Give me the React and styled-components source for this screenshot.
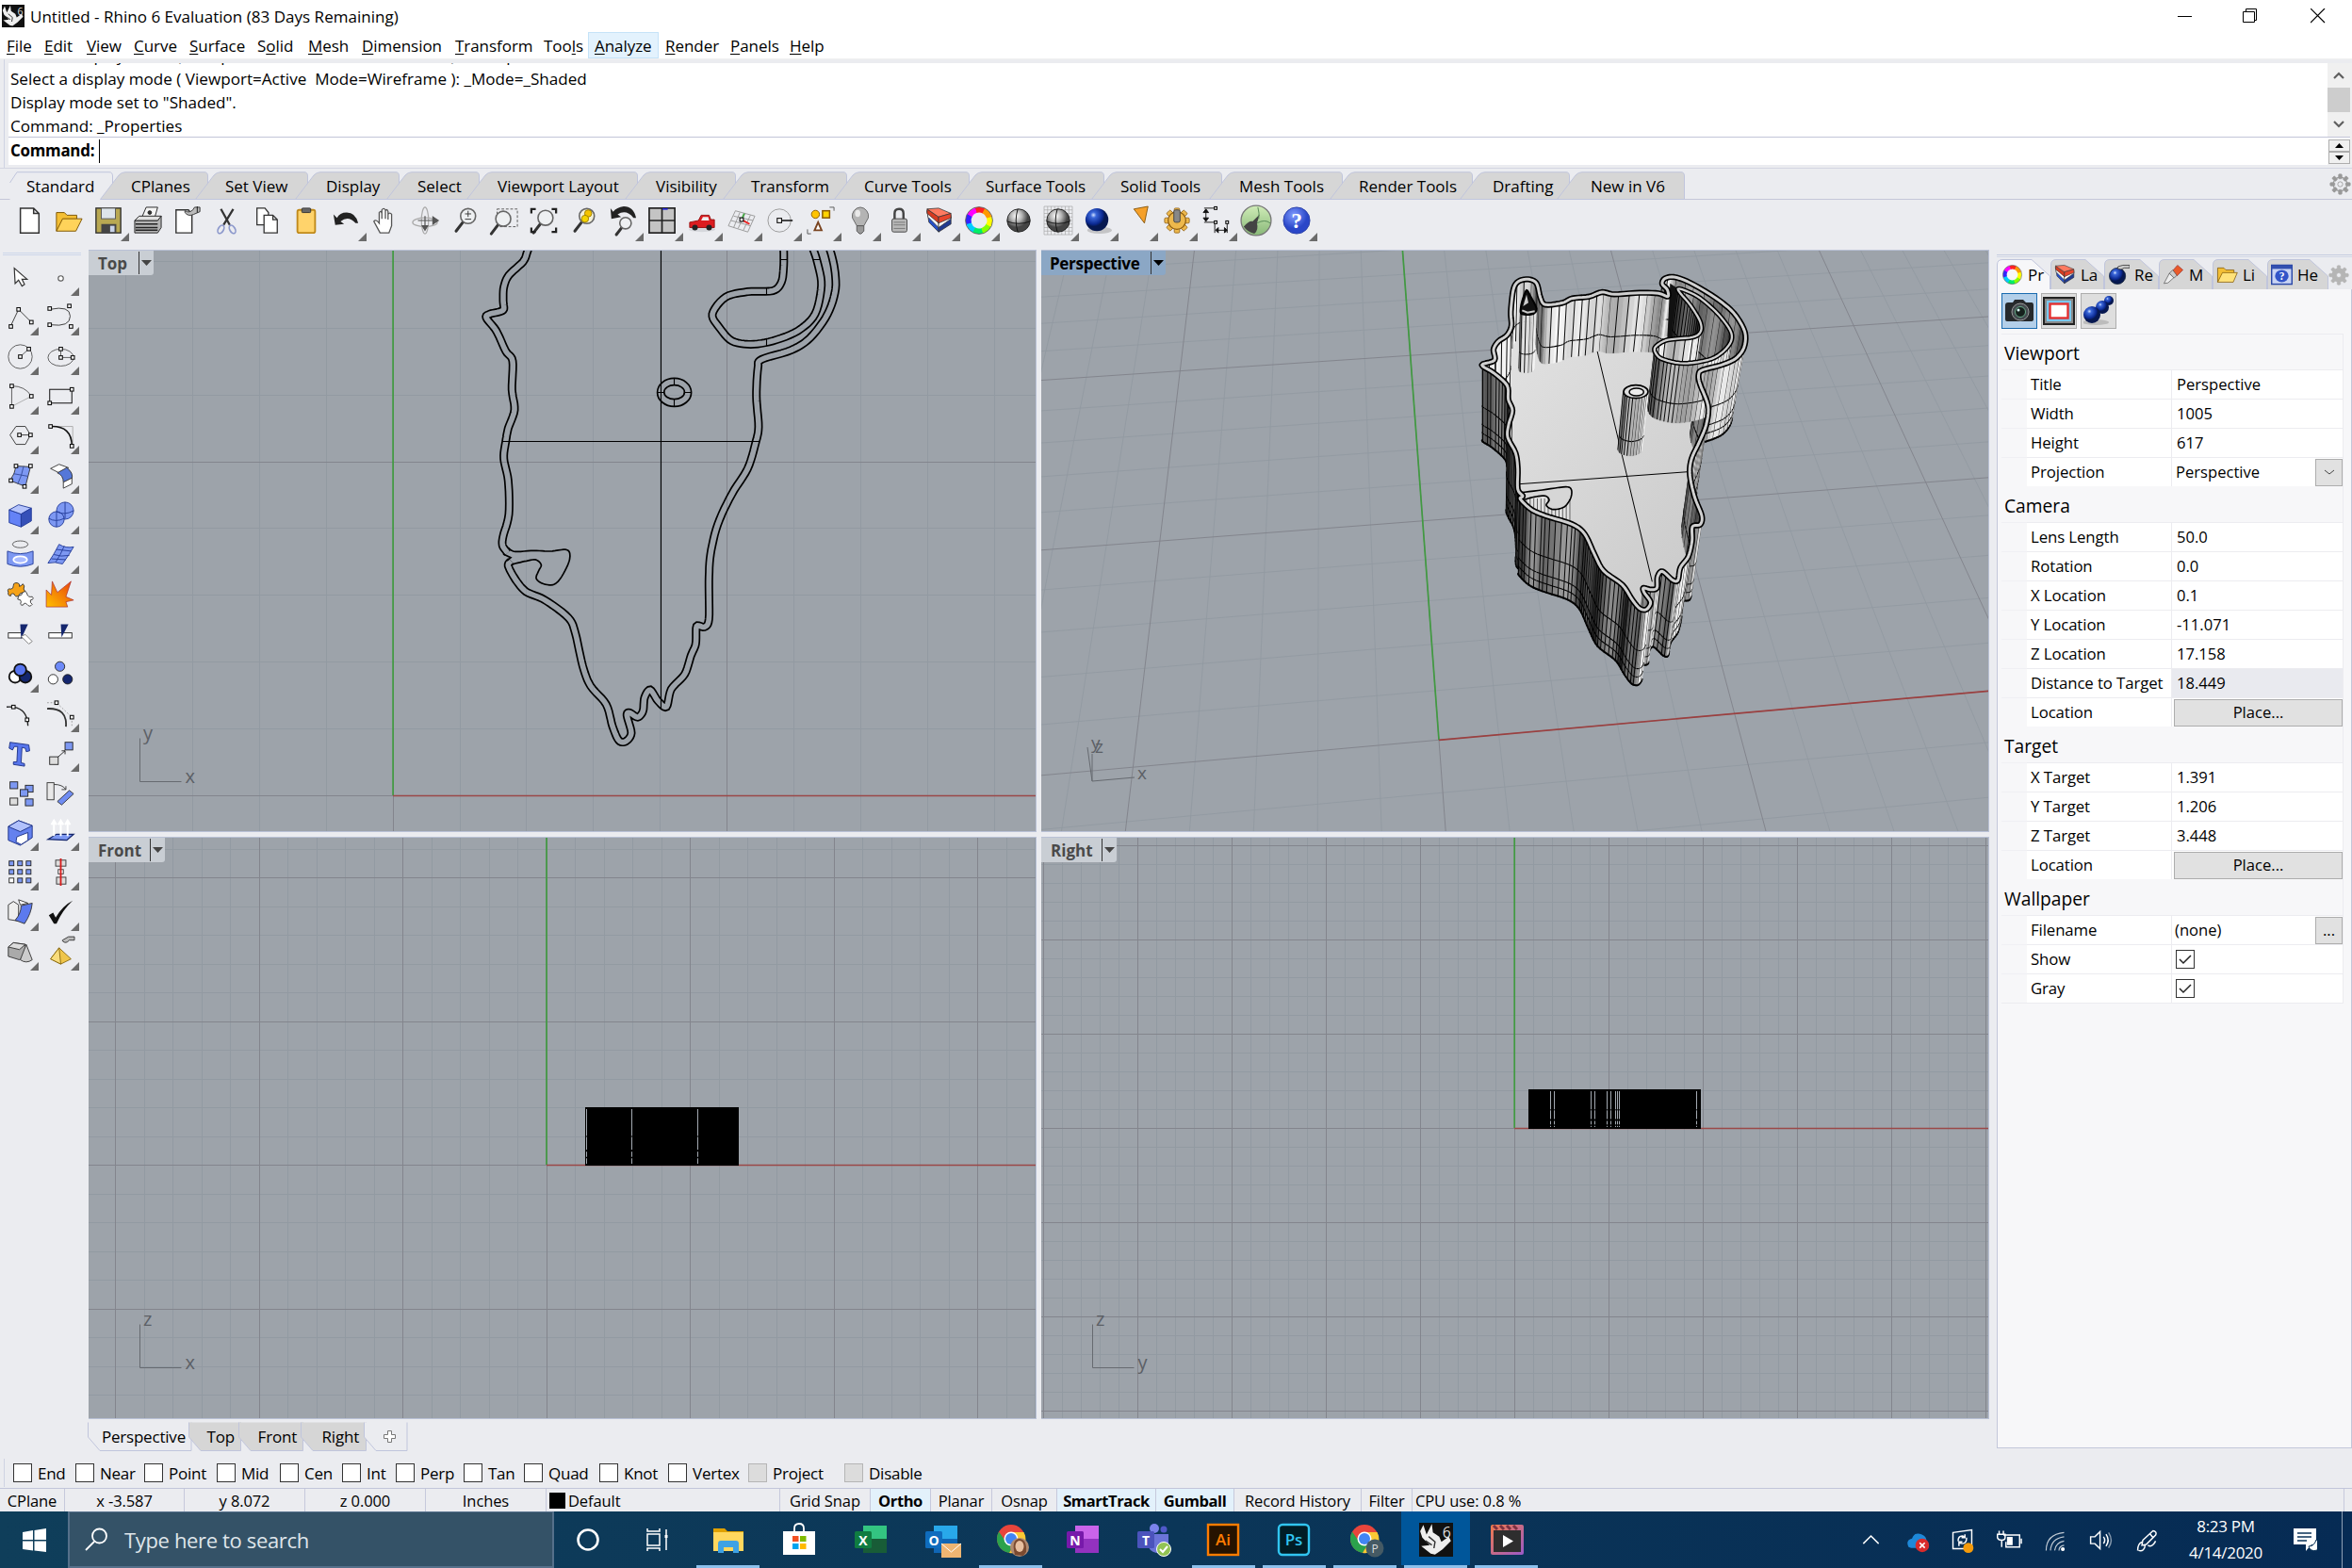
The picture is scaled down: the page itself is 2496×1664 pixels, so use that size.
import React from 'react';
import styled, { createGlobalStyle } from 'styled-components';

const Global = createGlobalStyle`
  * { box-sizing: border-box; }
  html, body { margin: 0; padding: 0; }
  body {
    width: 2496px; height: 1664px; overflow: hidden; background: #ebecf0; color: #000;
    font-family: "Open Sans", "Noto Sans", sans-serif; font-size: 17px; line-height: 1;
  }
  svg { display: block; }
`;

/* ---------- geometry helpers ---------- */
const pts = (s) => s.trim().split(/\s+/).map((p) => p.split(',').map(Number));

function sample(points, closed, n = 6) {
  const out = [];
  const L = points.length;
  const at = (i) => (closed ? points[(i + L) % L] : points[Math.max(0, Math.min(L - 1, i))]);
  const end = closed ? L : L - 1;
  for (let i = 0; i < end; i++) {
    const [a, b, c, d] = [at(i - 1), at(i), at(i + 1), at(i + 2)];
    for (let k = 0; k < n; k++) {
      const t = k / n;
      out.push([0, 1].map((m) => {
        const c1 = b[m] + (c[m] - a[m]) / 6.5;
        const c2 = c[m] - (d[m] - b[m]) / 6.5;
        const u = 1 - t;
        return u * u * u * b[m] + 3 * u * u * t * c1 + 3 * u * t * t * c2 + t * t * t * c[m];
      }));
    }
  }
  if (!closed) out.push(points[L - 1]);
  return out;
}
const toPath = (list, closed) =>
  'M' + list.map((p) => p[0].toFixed(1) + ' ' + p[1].toFixed(1)).join('L') + (closed ? 'Z' : '');

/* ---------- shell ---------- */
const Shell = styled.div`
  width: 2496px; height: 1664px; display: flex; flex-direction: column; background: #ebecf0;
`;
const TitleBar = styled.header`
  height: 34px; background: #fff; display: flex; align-items: center; padding-left: 2px; flex: none;
`;
const TitleText = styled.span`margin-left: 6px; flex: 1; letter-spacing: 0.02px;`;
const WindowButton = styled.div`
  width: ${(p) => p.$w}px; display: flex; justify-content: center;
`;
const MenuBar = styled.nav`
  height: 29px; background: #fff; display: flex; align-items: stretch; flex: none;
  border-bottom: 1px solid #f0f0f0;
`;
const MenuItem = styled.div`
  width: ${(p) => p.$w}px; padding: 1px 0 0 7px; display: flex; align-items: center; white-space: pre; line-height: 24px;
  background: ${(p) => (p.$on ? '#e3f2fd' : 'transparent')}; letter-spacing: -0.05px;
  box-shadow: ${(p) => (p.$on ? 'inset 0 0 0 1px #c5e3f8' : 'none')};
  u { text-underline-offset: 2px; text-decoration-thickness: 1px; }
`;
const MENU = [['', 'F', 'ile', 40], ['', 'E', 'dit', 45], ['', 'V', 'iew', 50], ['', 'C', 'urve', 59], ['', 'S', 'urface', 72],
  ['S', 'o', 'lid', 54], ['', 'M', 'esh', 57], ['', 'D', 'imension', 99], ['', 'T', 'ransform', 94], ['Too', 'l', 's', 54],
  ['', 'A', 'nalyze', 75], ['', 'R', 'ender', 69], ['', 'P', 'anels', 63], ['', 'H', 'elp', 60]];

const CommandArea = styled.section`
  height: 116px; flex: none; padding: 4px 0 3px 9px; display: flex; border-bottom: 1px solid #d3d6e2;
  background: linear-gradient(90deg, transparent 4px, #cfd3e2 4px, #cfd3e2 5px, transparent 5px);
`;
const CommandText = styled.div`flex: 1; background: #fff; display: flex; flex-direction: column;`;
const History = styled.div`
  height: 79px; border-bottom: 1px solid #c3c5d8; padding-left: 2px; overflow: hidden;
  display: flex; flex-direction: column; justify-content: flex-end; flex: none;
`;
const HistoryLine = styled.div`
  height: 25px; line-height: 24px; font-size: 17.1px; white-space: pre; flex: none;
  &:last-child { margin-bottom: -2px; }
`;
const Prompt = styled.div`
  flex: 1; padding-left: 2px; display: flex; align-items: center; font-weight: 700; font-size: 16.9px; letter-spacing: -0.25px;
`;
const Caret = styled.i`width: 1px; height: 25px; background: #000; margin-left: 5px;`;
const ScrollColumn = styled.div`width: 26px; display: flex; flex-direction: column; background: #efeff0; padding-right: 2px;`;
const ScrollPart = styled.div`
  height: 26px; display: flex; align-items: center; justify-content: center;
  background: ${(p) => (p.$thumb ? '#cdcdcd' : '#f0f0f0')};
`;
const Spinner = styled.div`
  height: 13px; margin: 0 0 0 1px; border: 1px solid #adadad; background: #f0f0f0;
  display: flex; align-items: center; justify-content: center;
`;
const SpinnerStack = styled.div`padding-top: 2px; background: #fff; border-top: 1px solid #c3c5d8;`;

/* ---------- toolbar tabs ---------- */
const TabStrip = styled.div`
  height: 33px; flex: none; display: flex; align-items: flex-end; padding-left: 10px; position: relative;
  border-bottom: 1px solid #c5c7d9;
`;
const Tab = styled.div`
  width: ${(p) => p.$w}px; height: 30px; position: relative; display: flex; align-items: center;
  padding-left: ${(p) => p.$pad}px; margin-bottom: -1px;
  > svg { position: absolute; left: ${(p) => (p.$first ? 0 : -14)}px; top: 0; }
  > span { position: relative; white-space: nowrap; }
`;
const GearSlot = styled.div`margin-left: auto; width: 26px; height: 31px; display: flex; align-items: center; justify-content: center;`;
const TABS = [['Standard', 110, 18], ['CPlanes', 101, 19], ['Set View', 106, 18], ['Display', 97, 19], ['Select', 85, 19],
  ['Viewport Layout', 168, 19], ['Visibility', 104, 19], ['Transform', 118, 16], ['Curve Tools', 130, 18], ['Surface Tools', 143, 17],
  ['Solid Tools', 125, 17], ['Mesh Tools', 128, 18], ['Render Tools', 138, 17], ['Drafting', 103, 21], ['New in V6', 122, 22]];

function TabItem({ label, w, pad, first }) {
  const W = first ? w : w + 14;
  return (
    <Tab $w={w} $pad={pad} $first={first}>
      <svg width={W} height="30">
        <path
          d={first ? `M0.5 12L8 .7H${W - 4}Q${W - 0.5} .7 ${W - 0.5} 5V30H.5Z` : `M0.5 29.5L20 4Q23 .7 27 .7H${W - 4}Q${W - 0.5} .7 ${W - 0.5} 5V29.5Z`}
          fill={first ? '#ebecf0' : '#d6d6d6'} stroke={first ? 'none' : '#c0c5dc'}
        />
        {first && <path d={`M.5 12L8 .7H${W - 4}Q${W - 0.5} .7 ${W - 0.5} 5V30`} fill="none" stroke="#c0c5dc" />}
      </svg>
      <span>{label}</span>
    </Tab>
  );
}

/* ---------- icon drawings on a 32 unit box ---------- */
const Sq = ({ x, y, s = 4 }) => <rect x={x - s / 2} y={y - s / 2} width={s} height={s} fill="#fff" stroke="#111" strokeWidth="1.2" />;
const Lens = ({ x = 20, y = 11, r = 8.5, c = '#eef0f2' }) => (
  <><path d={`M${x - r * 0.6} ${y + r * 0.7}L${x - r * 1.6} ${y + r * 2}`} stroke="#333" strokeWidth="3.2" strokeLinecap="round" />
    <circle cx={x} cy={y} r={r} fill={c} stroke="#666" strokeWidth="1.7" /></>
);
const Ball = ({ fill = 'url(#gball)' }) => (
  <><circle cx="16" cy="16" r="13" fill={fill} stroke="#222" /><path d="M3 17Q16 22 29 17M15 3Q11 16 15 29" fill="none" stroke="#111" /></>
);
const Wheel = () => (
  <g fill="none" strokeWidth="5.5">
    {['#f22', '#f0f', '#32f', '#0cf', '#0e6', '#8f0', '#ff0', '#f90'].map((c, i) => (
      <path key={c} d="M16 5A11 11 0 0 1 24.2 8.7" stroke={c} transform={`rotate(${i * -45 - 20} 16 16)`} />
    ))}
    <circle cx="16" cy="16" r="14" stroke="#555" strokeWidth=".8" />
  </g>
);
const Layers = () => (
  <g stroke="#333" strokeWidth=".8"><path d="M2 5L15 19V29L4 18Z" fill="#244fc8" /><path d="M15 19L29 12V20L15 29Z" fill="#203a90" />
    <path d="M2 5L15 15V24L3 12Z" fill="#fff" /><path d="M15 17L29 10V14L15 24Z" fill="#fff" />
    <path d="M2 3L15 12V19L2 8Z" fill="#d63a20" /><path d="M2 3L15 12L29 8L15 2Z" fill="#ff7a60" /><path d="M15 12L29 8V13L15 19Z" fill="#e8452c" /></g>
);
const RhinoMark = ({ size }) => (
  <svg width={size} height={size} viewBox="0 0 32 32" overflow="visible">
    <rect width="32" height="32" fill="#111" />
    <path d="M4 2L7 11L12 1L13 9L19 13L21 18L28 13L30 17L22 25L15 30L11 29L2 22L10 21L3 14L1 8Z" fill="#eee" />
    <path d="M9 13L15 18L14 24M6 17L12 21" stroke="#333" strokeWidth="1.3" fill="none" />
    <text x="22" y="14" fontFamily="Open Sans" fontSize="14" fill="#ddd">6</text>
  </svg>
);
const GearShape = ({ c = '#9a9a9a', r = 9, fill = 'none', tooth = 4.4 }) => (
  <g stroke={c} fill={fill}>
    {[0, 45, 90, 135, 180, 225, 270, 315].map((a) => <rect key={a} x={16 - tooth / 2} y={16 - r - 4} width={tooth} height="6" rx="1.2" fill={fill === 'none' ? c : fill} strokeWidth=".8" transform={`rotate(${a} 16 16)`} />)}
    <circle cx="16" cy="16" r={r} strokeWidth="1.3" />
    <circle cx="16" cy="16" r="3.2" fill="#ebecf0" /></g>
);
const hatch = (n, f) => Array.from({ length: n }, (_, i) => f(i)).join('');

const TOP_ICONS = [
  [<path d="M6 2H21L27 8V30H6ZM21 2V8H27" fill="#fff" stroke="#333" strokeWidth="1.6" />],
  [<g stroke="#7a5200"><path d="M2 28V7H11L14 10H25V14" fill="#f4bf35" /><path d="M2 28L9 14H31L24 28Z" fill="#ffd35a" /></g>],
  [<g><rect x="2" y="2" width="28" height="28" fill="#b8a852" stroke="#333" strokeWidth="1.5" /><rect x="8" y="2" width="16" height="12" fill="#dde4ea" stroke="#555" /><rect x="8" y="20" width="17" height="10" fill="#444" /><rect x="18" y="22" width="5" height="7" fill="#c9d3e8" /></g>, 1],
  [<g stroke="#222"><path d="M8 15L14 1H27L23 15Z" fill="#f5f5f5" /><circle cx="18" cy="7" r="2" fill="#333" /><path d="M1 16H27L31 11V24L27 30H1Z" fill="#b5b5b5" /><path d="M1 16H27L31 11H6Z" fill="#e0e0e0" /><path d="M2 20H27M2 24H27M2 27H27" strokeWidth="1.6" /></g>],
  [<g><path d="M3 4H17L21 9V30H3Z" fill="#fff" stroke="#333" strokeWidth="1.5" /><path d="M13 5Q18 8 22 4L24 1H30V6L23 9Q17 12 13 7Z" fill="#bbb" stroke="#333" /><path d="M27 0V7" stroke="#111" /></g>],
  [<g fill="none"><path d="M9 3L19 21M23 3L12 21" stroke="#333" strokeWidth="2.4" /><ellipse cx="9" cy="26" rx="3" ry="5" transform="rotate(30 9 26)" stroke="#8d99cc" strokeWidth="1.8" /><ellipse cx="22" cy="26" rx="3" ry="5" transform="rotate(-30 22 26)" stroke="#8d99cc" strokeWidth="1.8" /></g>],
  [<g fill="#fff" stroke="#333" strokeWidth="1.4"><path d="M5 2H14L18 7V21H5Z" /><path d="M13 10H23L28 15V30H13ZM23 10V15H28" /></g>],
  [<g stroke="#333"><rect x="6" y="4" width="20" height="26" rx="2" fill="#ffd36b" stroke="#c08a1c" strokeWidth="2" /><rect x="11" y="2" width="10" height="5" rx="1" fill="#666" /></g>],
  [<path d="M2 9L4 21L14 20L10 17Q19 10 27 19H30Q27 7 17 7Q9 7 6 13Z" fill="#222" />, 1],
  [<path d="M10 30L3 17Q5 14 9 19V7Q11 4 12 8V14V4Q14 1 16 4V14V5Q18 2 19 6V15V9Q21 6 23 9V22L20 30Z" fill="#fff" stroke="#555" strokeWidth="1.4" />],
  [<g fill="none" stroke="#aaa" strokeWidth="1.3"><ellipse cx="16" cy="16" rx="4" ry="15" /><ellipse cx="16" cy="18" rx="14" ry="5" /><path d="M16 11V22M8 16H25M13 22L16 27L19 22ZM25 12L31 16L25 20Z" stroke="#555" fill="#555" /></g>],
  [<><Lens /><path d="M16.5 8.5H23.5M20 5V12M16.5 14.5H23.5" stroke="#333" /></>],
  [<><rect x="8" y="3" width="23" height="20" fill="none" stroke="#555" strokeDasharray="3 2" /><Lens x={15} y={14} /></>],
  [<><Lens x={18} y={13} /><path d="M2 8V3H7M25 3H30V8M30 24V29H25M7 29H2V24" fill="none" stroke="#222" strokeWidth="2.4" /></>],
  [<><Lens x={20} y={11} c="#f3f0d8" /><circle cx="21.5" cy="8" r="4" fill="#f5c400" stroke="#a08000" /><circle cx="18" cy="14" r="4" fill="#f5d400" stroke="#a08000" /></>],
  [<><path d="M2 2L3 14L14 12L10 9Q20 3 28 13H31Q28 0 17 0Q9 1 5 6Z" fill="#222" /><Lens x={19} y={19} r={6.5} /></>, 1],
  [<g stroke="#222" strokeWidth="1.8" fill="#c4c4c4"><rect x="1" y="2" width="29" height="28" /><path d="M15.5 2V30M1 16H30" /><path d="M16 3H22" stroke="#22c" /></g>, 1],
  [<g><ellipse cx="16" cy="26" rx="15" ry="3" fill="#d5d7dc" /><path d="M2 24V18L12 16L15 10H24L26 15H30V24Z" fill="#dc1c20" stroke="#911" /><path d="M15 16L17 12H23L24 16Z" fill="#eee" /><circle cx="8" cy="24" r="3.2" fill="#222" /><circle cx="24" cy="24" r="3.2" fill="#222" /></g>, 1],
  [<g stroke="#999" fill="none"><path d="M9 5L31 11L23 29L1 22ZM14 7L7 24M20 8L12 25M26 10L18 27M7 11L29 16M4 16L26 22" /><path d="M16 15L25 20" stroke="#e22" strokeWidth="2" /><path d="M16 15L19 8" stroke="#4a4" strokeWidth="2" /><Sq x={16} y={15} /></g>, 1],
  [<g><circle cx="14" cy="16" r="13" fill="none" stroke="#999" /><path d="M14 16H29" stroke="#111" strokeWidth="1.6" /><Sq x={14} y={16} s={5} /></g>, 1],
  [<g><circle cx="10" cy="9" r="4.5" fill="#ffc400" stroke="#8a5a00" /><rect x="18" y="5" width="8" height="8" fill="#ffd400" stroke="#8a5a00" strokeWidth="1.6" /><path d="M13 18L17 27H9Z" fill="#fff" stroke="#7a4420" strokeWidth="2" /><path d="M26 1H31V5M1 26V31H5" fill="none" stroke="#555" /></g>, 1],
  [<g><path d="M16 1A10 10 0 0 0 7 13L12 22H20L25 13A10 10 0 0 0 16 1Z" fill="#b4b4b4" stroke="#666" /><ellipse cx="13" cy="8" rx="3" ry="4" fill="#e9e9e9" /><path d="M12 22H20V28L17 31H15L12 28Z" fill="#999" stroke="#555" /></g>, 1],
  [<g><path d="M10 15V8Q10 3 15 3T20 8V15" fill="none" stroke="#444" strokeWidth="2.6" /><rect x="7" y="14" width="17" height="15" rx="2" fill="#b8b8b8" stroke="#444" /><path d="M9 18H22M9 21H22M9 25H22" stroke="#777" /></g>, 1],
  [<Layers />, 1],
  [<g transform="translate(-1.6 -1.6) scale(1.1)"><Wheel /></g>, 1],
  [<Ball />],
  [<><path d={hatch(9, (i) => `M0 ${i * 4}H32M${i * 4} 0V32`)} stroke="#a5a5a5" strokeWidth=".7" /><Ball /></>, 1],
  [<><ellipse cx="18" cy="27" rx="14" ry="4" fill="#aaa" opacity=".6" /><circle cx="15" cy="15" r="13" fill="url(#gblue)" /></>, 1],
  [<path d="M12 3L28 0L24 19Z" fill="#f5a02a" stroke="#8a5a10" />, 1],
  [<g><GearShape c="#8a5a10" r={10} fill="#edb84c" tooth={6} /><circle cx="16" cy="16" r="4" fill="#edb84c" /><rect x="12.5" y="4" width="7" height="14" rx="2" fill="#888" stroke="#444" /></g>, 1],
  [<g fill="none" stroke="#111"><path d="M2 2H14M2 18H14V30M28 18V30M4 4V16M16 27H27" /><path d="M1 7L4 3L7 7ZM1 13L4 17L7 13ZM18 24L15 27L18 30ZM25 24L28 27L25 30Z" fill="#111" /><Sq x={15} y={2} s={3} /><Sq x={15} y={18} s={3} /><Sq x={28} y={18} s={3} /></g>, 1],
  [<g><circle cx="16" cy="16" r="17" fill="url(#ggreen)" stroke="#777" strokeWidth="1.4" /><path d="M2 23Q8 16 12 17L20 9L17 19Q19 27 14 31Q6 29 2 23Z" fill="#444" /><path d="M17 19Q26 14 32 19M18 1Q20 8 19 14" stroke="#585" fill="none" /></g>],
  [<g><circle cx="16" cy="16" r="15" fill="url(#ghelp)" stroke="#2a3fa8" /><text x="16" y="24" textAnchor="middle" fontFamily="Liberation Serif" fontSize="25" fontWeight="700" fill="#fff">?</text></g>, 1],
];

const B = '#7d98f2';
const SIDE_ICONS = [
  [<path d="M9 5L10 23L14 19L18 26L21 24L18 18L24 18Z" fill="#fff" stroke="#333" strokeWidth="1.3" />],
  [<ellipse cx="16" cy="17" rx="3" ry="3" fill="#fff" stroke="#555" strokeWidth="1.2" />, 1],
  [<g fill="none" stroke="#333"><path d="M5 26L14 7L29 22" /><Sq x={5} y={27} /><Sq x={14} y={7} /><Sq x={29} y={22} /></g>, 1],
  [<g fill="none" stroke="#333"><path d="M3 7Q27 2 27 15T4 25" /><Sq x={3} y={6} /><Sq x={26} y={3} /><Sq x={3} y={25} /><Sq x={28} y={27} /></g>, 1],
  [<g fill="none" stroke="#555"><circle cx="16" cy="16" r="14" /><path d="M16 16L26 7" /><Sq x={16} y={16} /><Sq x={26} y={7} /></g>, 1],
  [<g fill="none" stroke="#555"><ellipse cx="16" cy="17" rx="15" ry="10" /><path d="M16 7V17H30" /><Sq x={16} y={17} /><Sq x={16} y={7} /><Sq x={30} y={17} /></g>, 1],
  [<g fill="none" stroke="#555"><path d="M6 28V4Q22 4 29 16" /><path d="M6 28L29 16" stroke="#aaa" /><Sq x={6} y={4} /><Sq x={29} y={16} /><Sq x={6} y={28} /></g>, 1],
  [<g><rect x="3" y="8" width="26" height="16" fill="none" stroke="#222" strokeWidth="1.2" /><Sq x={3} y={24} /><Sq x={29} y={8} /></g>, 1],
  [<g fill="none" stroke="#333"><path d="M4 15L11 5H22L28 15L22 26H11Z" /><path d="M16 15H28" /><Sq x={15} y={15} /><Sq x={28} y={15} /></g>, 1],
  [<g fill="none"><path d="M4 5H30V29" stroke="#aaa" /><path d="M4 5Q29 4 29 28" stroke="#111" strokeWidth="1.8" /><Sq x={4} y={5} /><Sq x={29} y={28} /></g>, 1],
  [<g><path d="M11 5L28 6L22 29L4 22Q10 14 11 5Z" fill={B} stroke="#333" /><path d="M20 5Q18 16 13 26M8 14L25 17" stroke="#334a9a" fill="none" /><Sq x={11} y={5} /><Sq x={28} y={5} /><Sq x={5} y={22} /><Sq x={21} y={29} /></g>, 1],
  [<g stroke="#333"><path d="M4 8L14 3L25 7L14 13Z" fill="#fff" /><path d="M12 13L23 7Q31 13 29 20L19 24Q19 16 12 13Z" fill="#5577d8" /><path d="M19 24L29 19V26L19 31Z" fill="#fff" /></g>, 1],
  [<g stroke="#223a98"><path d="M3 10L17 15V30L3 25Z" fill="#6482f6" /><path d="M3 10L14 4L29 8L17 15Z" fill="#b4c3fb" /><path d="M17 15L29 8V23L17 30Z" fill="#3550b8" /></g>, 1],
  [<g stroke="#223a98"><circle cx="21" cy="11" r="10" fill={B} /><circle cx="11" cy="21" r="9" fill={B} /><path d="M11 12Q20 17 31 11M2 20Q10 25 20 20M21 1V20M11 12V30" fill="none" /></g>, 1],
  [<g><ellipse cx="16" cy="4" rx="9" ry="4" fill="none" stroke="#555" /><path d="M1 12Q16 18 31 12V27Q16 33 1 27Z" fill={B} stroke="#223a98" /><ellipse cx="16" cy="22" rx="8" ry="4" fill="#a9bbff" stroke="#fff" strokeWidth="2" /></g>, 1],
  [<g stroke="#223a98"><path d="M14 4Q22 9 31 7Q26 16 18 27Q9 24 1 26Q8 16 14 4Z" fill={B} /><path d="M8 16Q16 19 26 17M20 6Q16 16 10 25M11 10L28 12M5 21L22 22" fill="none" /></g>, 1],
  [<g stroke="#333"><path d="M2 14Q0 9 5 10Q8 10 8 6Q8 2 13 3Q16 4 15 7Q18 6 19 4Q22 6 20 10Q23 13 20 14Q15 14 14 18Q10 20 9 16Q5 14 5 18Q1 18 2 14Z" fill="#f5a218" /><path d="M14 18Q18 18 19 14Q23 11 24 16Q25 20 30 19Q33 22 28 23Q27 26 30 28Q27 32 24 28Q21 25 19 29Q15 29 17 25Q17 22 13 22Z" fill="#fff" /></g>],
  [<path d="M-1 31V11L5 17L6 1L12 14L28 1L22 19L31 23L22 25L24 31Z" fill="url(#gboom)" stroke="#a33" strokeWidth=".8" />],
  [<g><rect x="2" y="15" width="16" height="6" fill="#fff" stroke="#222" /><path d="M16 5H25L17 22Z" fill="#14266e" /><path d="M17 19L22 17L30 25L26 28Z" fill="#fff" stroke="#777" /></g>],
  [<g><rect x="2" y="15" width="27" height="6" fill="#fff" stroke="#222" /><path d="M16 5H25L17 20Z" fill="#14266e" /></g>],
  [<g stroke="#111" strokeWidth="2"><circle cx="10" cy="20" r="7" fill="#fff" /><circle cx="22" cy="20" r="7" fill="#14266e" /><circle cx="16" cy="12" r="7" fill="#5674ee" /></g>, 1],
  [<g stroke="#222"><circle cx="15" cy="8" r="5.6" fill="#6d8af8" /><circle cx="7" cy="23" r="5.6" fill="#fff" /><circle cx="24" cy="23" r="5.6" fill="#14266e" /></g>],
  [<g fill="none" stroke="#222" strokeWidth="1.5"><path d="M0 8Q24 6 25 30" /><Sq x={8} y={8} /><Sq x={24} y={23} /></g>],
  [<g fill="none"><path d="M0 10Q24 9 22 31" stroke="#333" strokeWidth="2" /><path d="M0 3H11L29 20V30" stroke="#999" strokeDasharray="2 2" /><Sq x={11} y={3} /><Sq x={29} y={20} /></g>, 1],
  [<path d="M4 3L26 6L27 13L23 14L22 10L18 9L17 27L21 28V31L8 29V26L12 26L13 8L9 8L7 12L3 10Z" fill="#5876ec" stroke="#1b2f86" />],
  [<g stroke="#222"><rect x="3" y="20" width="10" height="9" fill="#ddd" /><rect x="21" y="3" width="9" height="9" fill={B} /><path d="M13 20L21 13M17 13H21V17" fill="none" /></g>, 1],
  [<g stroke="#222"><rect x="4" y="3" width="9" height="8" fill={B} /><rect x="22" y="7" width="9" height="8" fill={B} /><rect x="16" y="12" width="9" height="8" fill={B} /><rect x="4" y="22" width="9" height="8" fill="#ddd" /><rect x="22" y="23" width="9" height="8" fill={B} /></g>],
  [<g stroke="#333"><rect x="0" y="4" width="8" height="20" fill="#e8e8e8" /><path d="M12 26L26 13L31 17L17 30Z" fill="#6f8cf2" /><path d="M8 6Q18 6 22 12M17 12H22V8" fill="none" /></g>],
  [<g stroke="#1b2f86"><path d="M2 9L14 2L30 8V22L16 31L2 25Z" fill="#6481ee" /><path d="M2 9L14 2L30 8L16 15Z" fill="#b1c1fb" /><path d="M12 21L25 16V25L17 30L11 27Z" fill="#fff" /></g>, 1],
  [<g><path d="M1 24L11 18H31L23 25Z" fill={B} stroke="#14266e" strokeWidth="1.4" /><path d="M8 20V4M5 7L8 2L11 7M16 20V4M13 7L16 2L19 7M24 20V4M21 7L24 2L27 7" stroke="#fff" strokeWidth="2.2" fill="none" /></g>, 1],
  [<g stroke="#222">{[0, 1, 2, 3, 4, 5, 6, 7, 8].map((i) => <rect key={i} x={3 + (i % 3) * 10} y={3 + Math.floor(i / 3) * 10} width="5.5" height="5.5" fill={i === 6 ? '#fff' : B} />)}</g>, 1],
  [<g stroke="#333"><rect x="10" y="2" width="12" height="7" fill="#ddd" /><rect x="13" y="13" width="6" height="5" fill="#fff" /><rect x="11" y="22" width="11" height="8" fill="#ddd" /><path d="M16 0V32" stroke="#d81b1b" strokeWidth="2" /></g>, 1],
  [<g stroke="#333"><path d="M2 8L8 4L14 8V27L2 25Z" fill="#eee" /><path d="M14 2L25 6L16 8Z" fill="#fff" /><path d="M10 26Q17 18 17 9L30 6Q29 18 21 30Z" fill="#5c7aee" /></g>, 1],
  [<path d="M2 20L7 17L10 23Q18 9 30 3Q18 14 11 30H8Z" fill="#111" />, 1],
  [<g stroke="#333"><path d="M2 11L8 6L22 8V20L15 26L2 22Z" fill="#aaa" /><path d="M2 11L8 6L22 8L15 14Z" fill="#ddd" /><path d="M23 8L30 26Q23 31 16 26Z" fill="#ccc" /></g>, 1],
  [<g stroke="#8a6a10"><path d="M14 12L28 25L16 31L4 25Z" fill="#efc54a" /><path d="M14 12L16 31L4 25Z" fill="#f8dc7c" /><path d="M18 4Q22 8 26 3H32V-1H25L18 3Z" fill="#bbb" stroke="#333" /></g>, 1],
];

const ToolBar = styled.div`height: 53px; flex: none; display: flex; padding: 1px 0 0 9.5px;`;
const ToolButton = styled.div`
  width: ${(p) => p.$w}px; height: 42px; position: relative; display: flex; align-items: center; justify-content: center;
  > svg.flyout { position: absolute; right: ${(p) => p.$fx}px; bottom: ${(p) => p.$fy}px; }
`;
function Tool({ icon, w = 42.04, size = 30, fx = -1, fy = -1 }) {
  return (
    <ToolButton $w={w} $fx={fx} $fy={fy}>
      <svg width={size} height={size} viewBox="0 0 32 32" overflow="visible">{icon[0]}</svg>
      {icon[1] && <svg className="flyout" width="9" height="9"><path d="M9 0V9H0Z" fill="#6b6b6b" /></svg>}
    </ToolButton>
  );
}

/* ---------- main area ---------- */
const Main = styled.div`height: 1314px; flex: none; display: flex;`;
const Side = styled.aside`width: 94px; padding: 3px 8px 0 0; flex: none;`;
const SideRule = styled.div`height: 3px; margin-left: 3px; margin-bottom: 2px; border: solid #cdd6ea; border-width: 1px 0;`;
const SideGrid = styled.div`display: grid; grid-template-columns: 43px 43px; grid-auto-rows: 42.1px;`;
const Center = styled.main`width: 2017px; flex: none; display: flex; flex-direction: column;`;
const Views = styled.div`
  display: grid; grid-template-columns: 1006px 1006px; grid-template-rows: 618px 618px; gap: 5px; height: 1241px; flex: none;
`;
const ViewFrame = styled.div`
  position: relative; background: #9da3aa; border: 1px solid #b9c1d6; border-left: 0; overflow: hidden;
  > svg { width: 100%; height: 100%; }
`;
const ViewTitle = styled.div`
  position: absolute; left: 0; top: 0; height: 26px; display: flex; align-items: center; padding-left: ${(p) => (p.$on ? 9 : 10)}px;
  background: ${(p) => (p.$on ? '#8ba7c5' : '#c9ced4')}; color: ${(p) => (p.$on ? '#000' : '#4a4a4a')};
  font-weight: 700; font-size: 17px; border-bottom-right-radius: 3px; width: ${(p) => p.$w}px; letter-spacing: ${(p) => (p.$on ? '-0.3px' : '0')};
`;
const TitleArrow = styled.span`
  margin-left: auto; width: 16px; height: 24px; border-left: 1px solid #333; display: flex; align-items: center; padding-left: 2px;
`;

function View({ name, w, on, x, y, children }) {
  return (
    <ViewFrame>
      <svg viewBox={`${x} ${y} 1005 616`} preserveAspectRatio="none">{children}</svg>
      <ViewTitle $w={w} $on={on}>{name}
        <TitleArrow><svg width="11" height="6"><path d="M0 0H11L5.5 6Z" fill={on ? '#000' : '#444'} /></svg></TitleArrow>
      </ViewTitle>
    </ViewFrame>
  );
}
const line = (x1, y1, x2, y2) => `M${x1.toFixed(1)} ${y1.toFixed(1)}L${x2.toFixed(1)} ${y2.toFixed(1)}`;

function OrthoGrid({ ox, oy, step, x, y }) {
  let minor = '';
  let major = '';
  for (let i = -60; i < 90; i++) {
    const gx = Math.round(ox + i * step) + 0.5;
    const gy = Math.round(oy + i * step) + 0.5;
    if (gx > x && gx < x + 1005) { if (i % 5) minor += line(gx, y, gx, y + 617); else major += line(gx, y, gx, y + 617); }
    if (gy > y && gy < y + 617) { if (i % 5) minor += line(x, gy, x + 1005, gy); else major += line(x, gy, x + 1005, gy); }
  }
  return (
    <g fill="none">
      <path d={minor} stroke="#929aa2" /><path d={major} stroke="#83858d" />
      <path d={line(ox + 0.5, oy, ox + 0.5, y)} stroke="#419a41" strokeWidth="1.7" />
      <path d={line(ox + 0.5, oy + 0.5, x + 1005, oy + 0.5)} stroke="#9b4848" strokeWidth="1.7" />
    </g>
  );
}
const AxisLabels = ({ x, y, a, b }) => (
  <g fontFamily="Open Sans" fontSize="20" fill="#5c6066">
    <path d={`M${x} ${y - 46}V${y}H${x + 44}`} fill="none" stroke="#666a70" />
    <text x={x + 3.5} y={y - 45}>{a}</text><text x={x + 48} y={y + 1}>{b}</text>
  </g>
);

/* Plan outline of the part */
const plan = (s) => pts(s).map(([a, b]) => [460 + a / 3, 260 + b / 2.8]);
const PLAN = [
  '305,0 297,25 285,50 240,90 224,125 222,165 224,190 212,198 180,205 168,216 200,255 230,315 252,345 250,430 258,490 238,545 230,585 224,635 238,700 240,800 222,865 220,893 236,915',
  '247,939 238,953 262,995 295,1030 355,1055 430,1108 452,1155 475,1250 500,1310 550,1365 570,1430 590,1472 612,1475 630,1450 616,1398 625,1390 650,1403 667,1385 672,1345 690,1322 715,1355 742,1372 757,1320 800,1275 820,1220 835,1185 838,1133 862,1135 877,1112 877,1000 882,920 905,830 950,740 1000,665 1025,590 1035,540 1028,450 1033,365 1045,340 1140,312 1200,275 1255,205 1280,130 1275,60 1258,0',
  '1115,0 1115,60 1108,110 1080,136 1000,139 930,155 888,205 910,245 950,285 1010,295 1080,285 1160,255 1215,205 1235,120 1222,50 1204,0',
].map((s) => toPath(sample(plan(s))));
const PLAN_NOSE = toPath(sample(plan('238,900 260,911 320,908 370,910 420,905 434,917 430,945 405,990 380,1010 345,1005 327,990 335,968 343,950 325,935 290,940 250,949')));
const PLAN_NOTCH = toPath(plan('222,918 246,929 234,938'));

function TopDrawing() {
  return (
    <>
      <OrthoGrid ox={416.6} oy={844} step={70.9} x={94} y={266} />
      <mask id="wall" maskUnits="userSpaceOnUse" x="94" y="260" width="1010" height="630">
        <g fill="none">
          {PLAN.map((d) => <path key={d} d={d} stroke="#fff" strokeWidth="9" />)}
          {PLAN.map((d) => <path key={d} d={d} stroke="#000" strokeWidth="5.6" />)}
        </g>
      </mask>
      <rect x="94" y="260" width="1010" height="630" mask="url(#wall)" />
      <g fill="none" stroke="#000" strokeWidth="1.7">
        <path d={PLAN_NOSE} /><path d={PLAN_NOTCH} />
        <ellipse cx="715.6" cy="416.4" rx="18" ry="15" /><ellipse cx="715.6" cy="416.2" rx="10.8" ry="7.5" />
        <path d="M701.5 260V752M533 468.5H806M697 416.5H705M726 416.5H734M715.5 401V409M715.5 424V432M813.5 305V313M813.5 360V367M829 275.5H836M862 275.5H870" strokeWidth="1.1" />
      </g>
      <AxisLabels x={148.5} y={829.5} a="y" b="x" />
    </>
  );
}
const Slab = ({ x, y, w, h, slots }) => (
  <>
    <rect x={x} y={y} width={w} height={h} />
    <path d={slots.map((s) => `M${s + 0.5} ${y + 2}V${y + h - 2}`).join('')} stroke="#a4aab2" strokeDasharray={`${h * 0.46} 1 ${h * 0.22} 2 ${h * 0.09} 1.5 ${h * 0.1} 1`} />
  </>
);

/* Ground plane projected with two vanishing points */
const proj = (i, j) => {
  const a = 0.003402 * i;
  const b = 0.03246 * j;
  const w = 1 + a + b;
  return [(1527 + a * 20284 + b * 1403.5) / w, (785.3 + a * -885 + b * -880) / w];
};
function PerspGrid() {
  let minor = '';
  let major = '';
  for (let i = -15; i <= 25; i++) {
    const d = line(...proj(i, -6), ...proj(i, 22));
    if (i % 5) minor += d; else major += d;
  }
  for (let j = -6; j <= 20; j++) {
    const d = line(...proj(-20, j), ...proj(30, j));
    if (j % 5) minor += d; else major += d;
  }
  return (
    <g fill="none"><path d={minor} stroke="#929aa2" strokeWidth=".9" /><path d={major} stroke="#83858d" />
      <path d={line(...proj(0, 0), ...proj(0, 22))} stroke="#419a41" strokeWidth="1.7" />
      <path d={line(...proj(0, 0), ...proj(30, 0))} stroke="#9b4040" strokeWidth="1.7" /></g>
  );
}

/* Extruded part, in a space three times the screen size */
const RIM = sample(pts('192,245 190,200 198,130 214,104 245,97 272,110 284,155 300,178 355,172 385,158 440,152 480,138 520,145 600,140 660,142 690,152 688,130 672,112 680,95 710,90 760,108 840,155 900,205 935,265 932,315 905,350 860,370 800,386 788,400 792,430 818,500 812,560 790,615 765,670 760,720 775,790 798,850 793,878 768,885 767,930 755,980 730,1015 722,1055 705,1055 672,1027 657,1045 655,1080 635,1085 612,1080 615,1095 635,1125 622,1148 600,1145 575,1115 545,1070 485,1025 455,970 425,908 385,877 300,850 255,830 220,797 228,787 212,765 212,700 205,650 180,600 183,560 195,515 182,480 178,435 135,395 98,370 138,355 135,320 150,295 178,275'), true, 5);
const RIM_D = toPath(RIM, true);
const CURL = sample(pts('722,128 785,152 850,208 892,268 882,310 830,350 740,365 670,350 648,325 655,308 690,290 770,281 795,262 792,230 762,180'), true, 6);
const CURL_D = toPath(CURL, true);
const NOSE = sample(pts('215,777 290,768 365,758 383,768 380,795 360,822 325,830 303,817 312,800 300,787 265,790 228,800'), false, 6);
const POST = sample(pts('548,455 560,441 588,435 616,441 628,455 616,469 588,475 560,469'), true, 3);
const EAR = sample(pts('228,160 240,132 252,150 272,190 262,207 238,210 222,205 222,185'), true, 4);

function Walls({ curve, depth, inner, closed = true, gap = 11, levels, bias = 0, hem = 0 }) {
  const quads = [];
  let run = 0;
  const n = closed ? curve.length : curve.length - 1;
  for (let i = 0; i < n; i++) {
    const a = curve[i];
    const b = curve[(i + 1) % curve.length];
    const drop = (p, f) => [p[0] - (p[0] - 100) * 0.05 * f * (depth / 240), p[1] + depth * f];
    const dx = b[0] - a[0];
    const dy = b[1] - a[1];
    const len = Math.hypot(dx, dy) || 1;
    const k = -(a[0] - 100) * 0.05 / 240;
    const facing = dx - dy * k;
    run += len;
    const edge = run >= gap;
    if (edge) run = 0;
    if (inner ? facing <= 0 : facing >= 0) continue;
    const s = inner ? 1 : -1;
    const nx = (-dy / len) * s;
    const v = Math.round(255 * Math.max(0.15, Math.min(0.96, 0.68 + 0.42 * nx + 0.12 * Math.sin(i * 0.7) + bias)));
    quads.push({ y: Math.max(a[1], b[1]), a, b, A: drop(a, 1), B: drop(b, 1), v, edge, lv: levels.map((f) => line(...drop(a, f), ...drop(b, f))).join('') });
  }
  quads.sort((p, q) => p.y - q.y);
  return quads.map((q, i) => (
    <g key={i}>
      <path d={`M${q.a}L${q.b}L${q.B}L${q.A}Z`} fill={`rgb(${q.v},${q.v},${q.v})`} stroke={`rgb(${q.v},${q.v},${q.v})`} strokeWidth="1" />
      <path d={q.lv} stroke="#000" strokeWidth="3.2" fill="none" />
      {hem > 0 && <path d={line(...q.A, ...q.B)} stroke="#000" strokeWidth={hem} strokeLinecap="round" />}
      {q.edge && <path d={line(...q.b, ...q.B)} stroke="#000" strokeWidth="2.9" />}
    </g>
  ));
}
const Ribbon = ({ d, w = 19, inner = 9 }) => (
  <g fill="none" strokeLinejoin="round"><path d={d} stroke="#000" strokeWidth={w} /><path d={d} stroke="#d0d0d0" strokeWidth={inner} /></g>
);
function PartSolid() {
  return (
    <g transform="translate(1540 264) scale(.33333)">
      <Walls curve={RIM} depth={240} levels={[0.54, 0.78, 0.89]} gap={11} bias={-0.02} hem={6} />
      <clipPath id="inside"><path d={RIM_D} /></clipPath>
      <g clipPath="url(#inside)">
        <rect x="80" y="80" width="880" height="1090" fill="url(#gfloor)" />
        <path d="M465 325L640 1060M218 749L755 710" stroke="#000" strokeWidth="3" />
        <Walls curve={RIM} depth={188} inner levels={[0.72]} gap={21} bias={0.1} />
        <path d="M697 110L728 132L792 232V262L762 282L688 288Z" fill="#111" />
        <Walls curve={EAR} depth={185} levels={[0.68]} gap={12} bias={0.15} />
        <Walls curve={CURL} depth={190} levels={[0.68]} gap={9} bias={0.02} />
        <clipPath id="curl"><path d={CURL_D} /></clipPath>
        <g clipPath="url(#curl)">
          <path d={CURL_D} fill="#8f8f8f" /><Walls curve={CURL} depth={185} inner levels={[0.85]} gap={20} bias={0.08} />
        </g>
        <path d="M228 800L300 787L380 790V885L228 860Z" fill="#e2e2e2" />
        <path d={hatch(13, (i) => `M${240 + i * 11.5} 795V870`)} stroke="#222" strokeWidth="2" />
        <path d={toPath(NOSE, true)} fill="#d6d6d6" />
        <path d={toPath(NOSE)} fill="none" stroke="#000" strokeWidth="5" />
        <Walls curve={POST} depth={185} levels={[0.75]} gap={7} bias={0.05} />
      </g>
      <path d={toPath(EAR, true)} fill="#111" stroke="#000" strokeWidth="6" />
      <path d="M229 183L240 146L246 172Z" fill="#ccc" />
      <path d="M226 196L243 203L266 199" fill="none" stroke="#ccc" strokeWidth="6" />
      <Ribbon d={CURL_D} w={16} inner={7} />
      <ellipse cx="588" cy="455" rx="39" ry="21" fill="#ddd" stroke="#000" strokeWidth="5" />
      <ellipse cx="590" cy="456" rx="23" ry="12" fill="#eee" stroke="#000" strokeWidth="4.5" />
      <Ribbon d={RIM_D} />
    </g>
  );
}

/* ---------- viewport tabs, osnap, status ---------- */
const ViewTabs = styled.div`display: flex; height: 35px; padding-top: 3px; margin-left: -1px;`;
const ViewTab = styled.div`
  width: ${(p) => p.$w}px; height: 31px; position: relative; display: flex; align-items: center; justify-content: flex-end; padding: 0 ${(p) => p.$pad}px 1px 0;
  > svg { position: absolute; left: ${(p) => (p.$first ? 0 : -3)}px; top: 0; }
  > span { position: relative; letter-spacing: -0.2px; }
`;
const VTABS = [['Perspective', 110, 6], ['Top', 53, 7], ['Front', 66, 7], ['Right', 67, 8]];
const Footer = styled.div`height: 25px; flex: none; display: flex; border-top: 1px solid #c2c5da; padding-right: 8px;`;
const OsnapBar = styled.div`height: 0; flex: 0 0 0;`;
const OsnapRow = styled.div`
  height: 30px; margin: -31px 0 1px; width: 1200px; display: flex; align-items: center; padding-left: 14px; position: relative;
  background: linear-gradient(90deg, transparent 4px, #cfd3e2 4px, #cfd3e2 5px, transparent 5px);
`;
const OsnapItem = styled.label`width: ${(p) => p.$w}px; display: flex; align-items: center; gap: 6px; letter-spacing: -0.25px;`;
const Box = styled.i`
  width: 20px; height: 20px; border: 1px solid ${(p) => (p.$off ? '#b5b5b5' : '#333')}; background: ${(p) => (p.$off ? '#dcdcdc' : '#fff')};
  display: flex; align-items: center; justify-content: center; flex: none;
`;
const OSNAPS = [['End', 66], ['Near', 73], ['Point', 77], ['Mid', 67], ['Cen', 66], ['Int', 57], ['Perp', 72], ['Tan', 64], ['Quad', 80], ['Knot', 73], ['Vertex', 85], ['Project', 102, 1], ['Disable', 100, 1]];
const Cell = styled.div`
  width: ${(p) => p.$w}px; border-right: 1px solid #c6c9dc; display: flex; align-items: center; font-size: 16.5px; white-space: nowrap;
  justify-content: ${(p) => (p.$left ? 'flex-start' : 'center')}; background: ${(p) => (p.$on ? '#e3f1fb' : 'transparent')};
  font-weight: ${(p) => (p.$on ? 700 : 400)}; letter-spacing: ${(p) => (p.$on ? '-0.4px' : '-0.1px')}; padding-left: ${(p) => (p.$left ? 3 : 0)}px;
  padding-top: 2px; gap: 3px;
`;
const Swatch = styled.i`width: 17px; height: 17px; background: #000; margin-top: -2px;`;
const CELLS = [['CPlane', 69], ['x -3.587', 127], ['y 8.072', 128], ['z 0.000', 128], ['Inches', 128], ['Default', 248, 's'], ['Grid Snap', 96], ['Ortho', 64, 'b'],
  ['Planar', 65], ['Osnap', 69], ['SmartTrack', 105, 'b'], ['Gumball', 83, 'b'], ['Record History', 135], ['Filter', 54]];

/* ---------- properties panel ---------- */
const PanelWrap = styled.aside`width: 377px; margin-left: 8px; padding-top: 8px; height: 1274px;`;
const PanelTabs = styled.div`height: 37px; border-top: 1px solid #c5cce0; display: flex; align-items: flex-end; position: relative; top: -3px; margin-bottom: -3px; box-shadow: inset 0 1px #ebecf0, inset 0 2px #d3d8e6;`;
const PanelTab = styled.div`
  width: ${(p) => p.$w}px; height: 32px; padding-left: ${(p) => p.$pad}px; display: flex; align-items: center; gap: 5px; position: relative; overflow: hidden;
  > svg { flex: none; position: relative; } > svg.shape { position: absolute; left: 0; top: 0; } > span { position: relative; }
`;
const PanelBody = styled.div`
  height: 1230px; background: #f7f7f9; border: solid #c3c7da; border-width: 0 1px 1px 1px; padding: 4px 8px 0 4px;
`;
const PanelButtons = styled.div`display: flex; gap: 4px; height: 42.5px;`;
const PageButton = styled.div`
  width: 38px; height: 38px; display: flex; align-items: center; justify-content: center;
  background: ${(p) => (p.$on ? '#b3cfe9' : '#dedede')}; border: 1px solid ${(p) => (p.$on ? '#1a6bb0' : '#adadad')};
`;
const PropGrid = styled.div`border: 1px solid #ececf0; border-left: 0;`;
const GroupTitle = styled.div`height: 37.9px; padding-left: 3px; display: flex; align-items: center; font-size: 19.2px; padding-top: 3px;`;
const PropRow = styled.div`height: 31px; display: grid; grid-template-columns: 27px 154px 1fr;`;
const Label = styled.div`background: #fff; border: solid #ececf0; border-width: 1px 1px 0 0; padding-left: 4px; display: flex; align-items: center; font-size: 16.8px; letter-spacing: -0.1px; white-space: nowrap;`;
const Value = styled.div`
  background: ${(p) => (p.$ro ? '#e9eaef' : '#fff')}; border-top: 1px solid #ececf0; padding-left: ${(p) => p.$pad ?? 5}px; display: flex; align-items: center;
  justify-content: space-between; font-size: 16.6px;
`;
const Gutter = styled.div`border-top: 1px solid #f0f0f4;`;
const PlaceButton = styled.div`
  flex: 1; height: 29px; background: #e1e1e1; border: 1px solid #adadad; display: flex; align-items: center; justify-content: center;
`;
const MiniButton = styled.div`width: 29px; height: 29px; background: #e1e1e1; border: 1px solid #adadad; display: flex; align-items: center; justify-content: center;`;
const GROUPS = [
  ['Viewport', [['Title', 'Perspective'], ['Width', '1005'], ['Height', '617'], ['Projection', 'Perspective', 'drop']]],
  ['Camera', [['Lens Length', '50.0'], ['Rotation', '0.0'], ['X Location', '0.1'], ['Y Location', '-11.071'], ['Z Location', '17.158'], ['Distance to Target', '18.449', 'ro'], ['Location', 'Place...', 'btn']]],
  ['Target', [['X Target', '1.391'], ['Y Target', '1.206'], ['Z Target', '3.448'], ['Location', 'Place...', 'btn']]],
  ['Wallpaper', [['Filename', '(none)', 'file'], ['Show', '', 'check'], ['Gray', '', 'check']]],
];
function ValueOf({ text, kind }) {
  if (kind === 'btn') return <Value $pad={2}><PlaceButton>{text}</PlaceButton></Value>;
  if (kind === 'check') return <Value $pad={4}><Box><svg width="16" height="14"><path d="M2 7L6 11L14 3" fill="none" stroke="#222" strokeWidth="1.5" /></svg></Box></Value>;
  if (kind === 'drop') return <Value $pad={4}>{text}<MiniButton><svg width="12" height="7"><path d="M1 1L6 5L11 1" fill="none" stroke="#444" /></svg></MiniButton></Value>;
  if (kind === 'file') return <Value $pad={3}>{text}<MiniButton>...</MiniButton></Value>;
  return <Value $ro={kind === 'ro'}>{text}</Value>;
}
const BlueBalls = () => <g><ellipse cx="13" cy="28" rx="14" ry="3" fill="#999" opacity=".5" /><circle cx="27" cy="5" r="5" fill="url(#gblue)" /><circle cx="20" cy="12" r="7" fill="url(#gblue)" /><circle cx="9" cy="20" r="9" fill="url(#gblue)" /></g>;
const PTABS = [
  ['Pr', 57, <Wheel />], ['La', 57, <Layers />],
  ['Re', 58, <g><circle cx="14" cy="18" r="12" fill="url(#gblue)" stroke="#123" /><path d="M14 7Q20 10 24 6H32V2H22L15 4Z" fill="#ccc" stroke="#222" /></g>],
  ['M', 57, <g><path d="M2 29L10 14L17 20L8 28Z" fill="#eee" stroke="#555" /><path d="M15 10L22 2L30 9L21 18Z" fill="#ea5a2a" stroke="#933" /><path d="M10 14L15 9L21 17L17 21Z" fill="#ccc" stroke="#555" /></g>],
  ['Li', 58, <g stroke="#7a5200"><path d="M2 27V6H11L14 9H26V13" fill="#f4bf35" /><path d="M2 27L9 13H31L25 27Z" fill="#ffe27a" /></g>],
  ['He', 65, <g><rect x="1" y="2" width="30" height="28" fill="#c9d4f4" stroke="#2a48a8" strokeWidth="2" /><path d="M1 5H31" stroke="#3350b0" strokeWidth="5" /><ellipse cx="16" cy="18" rx="10" ry="9" fill="#3355c8" /><text x="16" y="24" textAnchor="middle" fontFamily="Liberation Serif" fontSize="16" fontWeight="700" fill="#fff">?</text></g>],
];

/* ---------- taskbar ---------- */
const TaskBar = styled.footer`
  height: 60px; flex: none; display: flex; align-items: center; background: linear-gradient(90deg, #0f3e5a, #0b3658 50%, #062b54); color: #fff;
`;
const StartButton = styled.div`width: 72px; display: flex; justify-content: center;`;
const Search = styled.div`
  width: 516px; height: 60px; background: #345267; border: 2px solid #55708a; border-width: 1px 2px 2px; display: flex; align-items: center; padding-left: 16px; gap: 17px;
  font-size: 22px; color: #dfe5ea; letter-spacing: -0.35px; flex: none;
`;
const TaskButton = styled.div`
  width: ${(p) => p.$w ?? 75.1}px; height: 60px; flex: none; display: flex; align-items: center; justify-content: center;
  background: ${(p) => (p.$active ? 'linear-gradient(#00569a, #00569a) center / 73px 100% no-repeat' : 'none')};
  border-bottom: 3px solid transparent; padding-top: 2px;
  border-image: ${(p) => (p.$open ? 'linear-gradient(90deg, transparent 7px, #8cc0ec 7px, #8cc0ec 68px, transparent 68px) 3' : 'none')};
`;
const Tray = styled.div`margin-left: auto; display: flex; align-items: center; height: 60px;`;
const TrayIcon = styled.div`width: ${(p) => p.$w ?? 48.9}px; display: flex; justify-content: center;`;
const Clock = styled.div`width: 110px; margin-left: 4px; text-align: center; font-size: 17px; line-height: 28px; letter-spacing: -0.3px;`;
const Chrome = ({ badge }) => (
  <g><circle cx="16" cy="15" r="15" fill="#e8453c" /><path d="M3 7.5A15 15 0 0 0 14 30L21 19L9 16Z" fill="#2ba24c" /><path d="M16 8H29.5A15 15 0 0 1 14 30L22 17Z" fill="#fcc934" />
    <circle cx="16" cy="15" r="7.5" fill="#fff" /><circle cx="16" cy="15" r="6" fill="#4285f4" />{badge}</g>
);
const OfficeTile = ({ c, d, l, ch }) => (
  <g><path d="M9 1H34V30H9Z" fill={c} /><path d="M9 15H34V30H9Z" fill={l} /><rect x="0" y="7" width="18" height="18" rx="1.5" fill={d} /><text x="9" y="21.5" textAnchor="middle" fontFamily="Open Sans" fontSize="14" fontWeight="700" fill="#fff">{ch}</text></g>
);
const Adobe = ({ c, bg, t, r }) => (
  <g><rect x="0" y="0" width="32" height="32" rx={r} fill={bg} stroke={c} strokeWidth="2.4" /><text x="16" y="22" textAnchor="middle" fontFamily="Open Sans" fontSize="17" fontWeight="600" fill={c}>{t}</text></g>
);
const TASKS = [
  [<circle cx="16" cy="16" r="10.5" fill="none" stroke="#fff" strokeWidth="2.6" />, 0],
  [<g fill="none" stroke="#fff" strokeWidth="1.5"><rect x="5" y="10" width="13" height="12" /><path d="M5 4V7H18V4M5 28V25H18V28M25 5V27" /><path d="M25 11V14" strokeWidth="3" /></g>, 0],
  [<g><path d="M0 4H12L15 7H32V14H0Z" fill="#e0a100" /><rect x="0" y="8" width="32" height="20" fill="#ffd75e" /><path d="M5 30V20Q5 17 8 17H24Q27 17 27 20V30H21V24H11V30Z" fill="#3ea2e5" /></g>, 1],
  [<g><path d="M11 8V4Q11 -1 16 -1T21 4V8" fill="none" stroke="#fff" strokeWidth="1.8" /><rect x="-1" y="7" width="34" height="25" fill="#fff" /><path d="M9 12H15.5V18H9Z" fill="#f25022" /><path d="M17 12H23.5V18H17Z" fill="#7fba00" /><path d="M9 20H15.5V26H9Z" fill="#00a4ef" /><path d="M17 20H23.5V26H17Z" fill="#ffb900" /></g>, 0],
  [<OfficeTile c="#33c481" l="#185c37" d="#107c41" ch="X" />, 0],
  [<g><OfficeTile c="#28a8ea" l="#1066b5" d="#0f6cbd" ch="O" /><path d="M17 20H38V35H17Z" fill="#efb572" /><path d="M17 20L27.5 29L38 20" stroke="#fff" fill="none" /></g>, 0],
  [<Chrome badge={<g><circle cx="25" cy="24" r="10" fill="#b08a70" /><path d="M20 32Q16 17 24 15Q33 15 32 29L29 33Z" fill="#7a4a30" /><ellipse cx="25" cy="23" rx="4.5" ry="6" fill="#e8c0a0" /></g>} />, 1],
  [<OfficeTile c="#ca64ea" l="#9332bf" d="#7719aa" ch="N" />, 0],
  [<g><circle cx="28" cy="5" r="3.5" fill="#5059c9" /><circle cx="18" cy="4" r="5" fill="#7b83eb" /><path d="M12 10H33V22Q30 30 20 30Q12 28 12 22Z" fill="#6b74d8" /><rect x="0" y="7" width="18" height="18" rx="1.5" fill="#4b53bc" /><text x="9" y="21.5" textAnchor="middle" fontFamily="Open Sans" fontSize="14" fontWeight="700" fill="#fff">T</text><circle cx="28" cy="26" r="7.5" fill="#92c353" stroke="#fff" /><path d="M24 26L27 29L32 23" stroke="#fff" strokeWidth="2" fill="none" /></g>, 0],
  [<Adobe c="#ff7c00" bg="#261300" t="Ai" r={0} />, 1],
  [<Adobe c="#31c5f0" bg="#001d26" t="Ps" r={4} />, 1],
  [<Chrome badge={<g><circle cx="27" cy="25" r="9.5" fill="#455a64" /><text x="27" y="29.5" textAnchor="middle" fontFamily="Open Sans" fontSize="12" fill="#ddd">P</text></g>} />, 1],
  ['rhino', 2],
  [<g><defs><linearGradient id="gfilm" x2="1" y2="1"><stop stopColor="#f07a4a" /><stop offset="1" stopColor="#9a5ac8" /></linearGradient></defs><rect x="-1" y="0" width="35" height="32" rx="2" fill="url(#gfilm)" /><rect x="2" y="6" width="29" height="23" fill="#2e2e2e" /><path d="M2 1L6 5M9 1L13 5M16 1L20 5M23 1L27 5" stroke="#7a3040" strokeWidth="3" /><path d="M12 11L23 17.5L12 24Z" fill="#fff" /></g>, 1],
];
const TRAY = [
  [<path d="M7 20L16 11L25 20" />],
  [<g stroke="none"><path d="M6 24Q2 16 10 14Q13 6 21 9Q27 11 27 17Q31 19 29 25H9Z" fill="#1e88d8" /><circle cx="22" cy="22" r="8" fill="#d92b2b" /><path d="M19 19L25 25M25 19L19 25" stroke="#fff" strokeWidth="1.8" /></g>],
  [<g><path d="M5 7L27 4V26H5Z" /><path d="M11 17Q11 11 16 11L19 12M21 13Q21 20 16 20L12 19M19 9V13H15M12 23V18H16" /><circle cx="23" cy="25" r="6" fill="#f59b0b" stroke="none" /></g>],
  [<g><path d="M10 10H29V24H13V18" /><path d="M31 14V20M5 5V9M10 5V9M3 9H12V13Q12 16 8 16T3 13ZM8 16V24" /><rect x="15" y="13" width="5" height="8" fill="#fff" /></g>],
  [<g strokeWidth="1.3"><path d="M6 28Q6 9 27 7M11 28Q12 14 27 12M16 28Q17 19 27 17M21 28Q21 23 27 22" opacity=".75" /><circle cx="25.5" cy="26.5" r="1.6" fill="#fff" /></g>],
  [<g><path d="M4 12H9L15 6V26L9 20H4Z" /><path d="M19 12Q22 16 19 20M22 9Q27 16 22 23" /><path d="M25 7Q31 16 25 25" opacity=".5" /></g>],
  [<g><path d="M11 16L23 5Q28 6 26 10L15 21L10 22ZM19 8L23 13M5 28Q5 20 10 18M6 28Q13 30 14 21M17 22Q22 25 26 17" /></g>],
];

export default function App() {
  return (
    <Shell>
      <Global />
      <svg width="0" height="0" style={{ position: 'absolute' }}>
        <defs>
          <radialGradient id="gball" cx=".4" cy=".3"><stop stopColor="#fff" /><stop offset=".5" stopColor="#b5b5b5" /><stop offset="1" stopColor="#444" /></radialGradient>
          <radialGradient id="gblue" cx=".35" cy=".3"><stop stopColor="#cfe0ff" /><stop offset=".25" stopColor="#3a66d8" /><stop offset=".8" stopColor="#0a2890" /><stop offset="1" stopColor="#061850" /></radialGradient>
          <radialGradient id="ghelp" cx=".4" cy=".3"><stop stopColor="#7f9cff" /><stop offset="1" stopColor="#2a46c8" /></radialGradient>
          <linearGradient id="ggreen" x2="0" y2="1"><stop stopColor="#d0ecb8" /><stop offset="1" stopColor="#88b878" /></linearGradient>
          <linearGradient id="gboom" x1="1" y1="0" x2="0" y2="1"><stop stopColor="#e8400c" /><stop offset="1" stopColor="#ffc000" /></linearGradient>
          <linearGradient id="gfloor" x2="1" y2="1"><stop stopColor="#e6e6e6" /><stop offset="1" stopColor="#c6c6c6" /></linearGradient>
        </defs>
      </svg>
      <TitleBar>
        <RhinoMark size={24} />
        <TitleText>Untitled - Rhino 6 Evaluation (83 Days Remaining)</TitleText>
        <WindowButton $w={69}><svg width="16" height="16"><path d="M0 8.5H15" stroke="#000" /></svg></WindowButton>
        <WindowButton $w={70}><svg width="16" height="16" fill="none" stroke="#000"><path d="M.5 3.5H12.5V14.5H.5ZM3.5 3V.5H14.5V12.5H13" /></svg></WindowButton>
        <WindowButton $w={73}><svg width="16" height="16"><path d="M0 0L15 15M15 0L0 15" stroke="#000" strokeWidth="1.2" /></svg></WindowButton>
      </TitleBar>
      <MenuBar>{MENU.map(([a, b, c, w]) => <MenuItem key={b + c} $w={w} $on={b === 'A'}><span>{a}<u>{b}</u>{c}</span></MenuItem>)}</MenuBar>
      <CommandArea>
        <CommandText>
          <History>
            <HistoryLine>{'Select a display mode ( Viewport=Active  Mode=Wireframe ): _Viewport=_Active'}</HistoryLine>
            <HistoryLine>{'Select a display mode ( Viewport=Active  Mode=Wireframe ): _Mode=_Shaded'}</HistoryLine>
            <HistoryLine>Display mode set to "Shaded".</HistoryLine>
            <HistoryLine>Command: _Properties</HistoryLine>
          </History>
          <Prompt>Command:<Caret /></Prompt>
        </CommandText>
        <ScrollColumn>
          <ScrollPart><svg width="12" height="8"><path d="M1 7L6 2L11 7" fill="none" stroke="#606060" strokeWidth="2.2" /></svg></ScrollPart>
          <ScrollPart $thumb />
          <ScrollPart><svg width="12" height="8"><path d="M1 1L6 6L11 1" fill="none" stroke="#606060" strokeWidth="2.2" /></svg></ScrollPart>
          <SpinnerStack>
            <Spinner><svg width="9" height="5"><path d="M0 5H9L4.5 0Z" /></svg></Spinner>
            <Spinner><svg width="9" height="5"><path d="M0 0H9L4.5 5Z" /></svg></Spinner>
          </SpinnerStack>
        </ScrollColumn>
      </CommandArea>
      <TabStrip>
        {TABS.map(([t, w, pad], i) => <TabItem key={t} label={t} w={w} pad={pad} first={i === 0} />)}
        <GearSlot><svg width="23" height="23" viewBox="2 2 28 28"><GearShape c="#999" /></svg></GearSlot>
      </TabStrip>
      <ToolBar>{TOP_ICONS.map((ic, i) => <Tool key={i} icon={ic} />)}</ToolBar>
      <Main>
        <Side>
          <SideRule />
          <SideGrid>{SIDE_ICONS.map((ic, i) => <Tool key={i} icon={ic} w={43} size={29} fx={2} fy={1} />)}</SideGrid>
        </Side>
        <Center>
          <Views>
            <View name="Top" w={69} x={94} y={266}><TopDrawing /></View>
            <View name="Perspective" w={132} on x={1105} y={266}>
              <PerspGrid /><PartSolid />
              <g fontFamily="Open Sans" fontSize="19" fill="#5c6066"><path d="M1154 793L1159 829L1204 825M1159 829V800" fill="none" stroke="#666a70" /><text x="1158" y="795">y</text><text x="1162" y="799">z</text><text x="1207" y="827">x</text></g>
            </View>
            <View name="Front" w={81} x={94} y={889}>
              <OrthoGrid ox={579.5} oy={1236} step={30.5} x={94} y={889} />
              <Slab x={621} y={1175} w={163} h={62} slots={[622, 670, 740]} />
              <AxisLabels x={148.5} y={1451.5} a="z" b="x" />
            </View>
            <View name="Right" w={80} x={1105} y={889}>
              <OrthoGrid ox={1606.7} oy={1197} step={20} x={1105} y={889} />
              <Slab x={1622} y={1156} w={183} h={42} slots={[1645, 1649, 1688, 1692, 1705, 1709, 1714, 1716, 1718, 1800]} />
              <AxisLabels x={1159.5} y={1451.5} a="z" b="y" />
            </View>
          </Views>
          <ViewTabs>
            {VTABS.map(([t, w, pad], i) => (
              <ViewTab key={t} $w={w} $pad={pad} $first={i === 0}>
                <svg width={w + 3} height="31"><path d={`M.5 .5V16L13 30.5H${w + (i ? 2.5 : 0)}V.5`} fill={i ? '#d6d6d6' : '#ebecf0'} stroke="#c0c5dc" /></svg>
                <span>{t}</span>
              </ViewTab>
            ))}
            <ViewTab $w={44} $pad={13}>
              <svg width="47" height="31"><path d="M.5 .5V16L13 30.5H46V.5" fill="#ebecf0" stroke="#c0c5dc" /><path d="M21.5 13.5H25.5V9.5H29.5V13.5H33.5V17.5H29.5V21.5H25.5V17.5H21.5Z" fill="#fff" stroke="#777" /></svg>
            </ViewTab>
          </ViewTabs>
        </Center>
        <PanelWrap>
          <PanelTabs>
            {PTABS.map(([t, w, ic], i) => (
              <PanelTab key={t} $w={w} $pad={i === 0 ? 5 : 4}>
                <svg className="shape" width={w} height="32"><path d={`M.5 32V6Q.5 .5 6 .5H${w - 20}L${w - 0.5} 18V32`} fill={i ? '#d6d6d6' : '#f7f7f9'} stroke="#c0c5dc" /></svg>
                <svg width="23" height="23" viewBox="0 0 32 32">{ic}</svg><span>{t}</span>
              </PanelTab>
            ))}
            <svg width="22" height="30" viewBox="2 0 28 32"><GearShape c="#b5b5b5" fill="#b5b5b5" /></svg>
          </PanelTabs>
          <PanelBody>
            <PanelButtons>
              <PageButton $on><svg width="32" height="26" viewBox="0 0 32 26"><path d="M1 7Q1 4 4 4H9L11 1H20L23 4H29Q31 4 31 7V22Q31 24 28 24H3Q1 24 1 22Z" fill="#26292c" /><circle cx="17" cy="14" r="9" fill="#454b50" stroke="#999" /><circle cx="17" cy="14" r="5.5" fill="#16211d" stroke="#6a8" /><circle cx="15" cy="12" r="1.5" fill="#dff" /></svg></PageButton>
              <PageButton><svg width="34" height="30"><rect x="1" y="1" width="32" height="28" fill="#888" stroke="#222" strokeWidth="2" /><rect x="4" y="4" width="26" height="22" fill="#7ac9ef" /><rect x="7.5" y="7.5" width="19" height="15" fill="#fff" stroke="#e43030" strokeWidth="2.4" /></svg></PageButton>
              <PageButton><svg width="32" height="32" viewBox="0 0 32 32"><BlueBalls /></svg></PageButton>
            </PanelButtons>
            <PropGrid>
              {GROUPS.map(([g, rows]) => (
                <React.Fragment key={g}>
                  <GroupTitle>{g}</GroupTitle>
                  {rows.map(([l, v, k]) => <PropRow key={l}><Gutter /><Label>{l}</Label><ValueOf text={v} kind={k} /></PropRow>)}
                </React.Fragment>
              ))}
            </PropGrid>
          </PanelBody>
        </PanelWrap>
      </Main>
      <OsnapBar>
        <OsnapRow>{OSNAPS.map(([t, w, off]) => <OsnapItem key={t} $w={w}><Box $off={off} />{t}</OsnapItem>)}</OsnapRow>
      </OsnapBar>
      <Footer>
        {CELLS.map(([t, w, k]) => <Cell key={t} $w={w} $on={k === 'b'} $left={k === 's'}>{k === 's' && <Swatch />}{t}</Cell>)}
        <Cell $w={989} $left>CPU use: 0.8 %</Cell>
      </Footer>
      <TaskBar>
        <StartButton><svg width="25" height="25"><path d="M0 4L11 2V12H0ZM12.5 2L25 0V12H12.5ZM0 13.5H11V23.5L0 22ZM12.5 13.5H25V25L12.5 23.5Z" fill="#fff" /></svg></StartButton>
        <Search><svg width="25" height="25" fill="none" stroke="#fff" strokeWidth="1.8"><circle cx="15.5" cy="9" r="7.5" /><path d="M10 15L1 24" /></svg>Type here to search</Search>
        {TASKS.map(([ic, open], i) => (
          <TaskButton key={i} $open={open > 0} $active={open === 2} $w={i === 0 ? 72 : 75.1}>
            {ic === 'rhino' ? <RhinoMark size={36} /> : <svg width="32" height="32" viewBox="0 0 32 32" overflow="visible">{ic}</svg>}
          </TaskButton>
        ))}
        <Tray>
          {TRAY.map(([ic], i) => <TrayIcon key={i}><svg width="29" height="29" viewBox="0 0 32 32" fill="none" stroke="#fff" strokeWidth="1.6">{ic}</svg></TrayIcon>)}
          <Clock>8:23 PM<br />4/14/2020</Clock>
          <TrayIcon $w={57}><svg width="26" height="26"><path d="M1 1H25V18H20L14 25V18H1Z" fill="#fff" /><path d="M5 6H20M5 10H20M5 14H15" stroke="#0b3358" strokeWidth="1.6" /><path d="M25 13A6 6 0 1 1 17 20Q23 20 25 13Z" fill="#fff" stroke="#0b3358" /></svg></TrayIcon>
          <TrayIcon $w={22}><svg width="1" height="60"><path d="M.5 0V60" stroke="#8fa0b5" /></svg></TrayIcon>
        </Tray>
      </TaskBar>
    </Shell>
  );
}
